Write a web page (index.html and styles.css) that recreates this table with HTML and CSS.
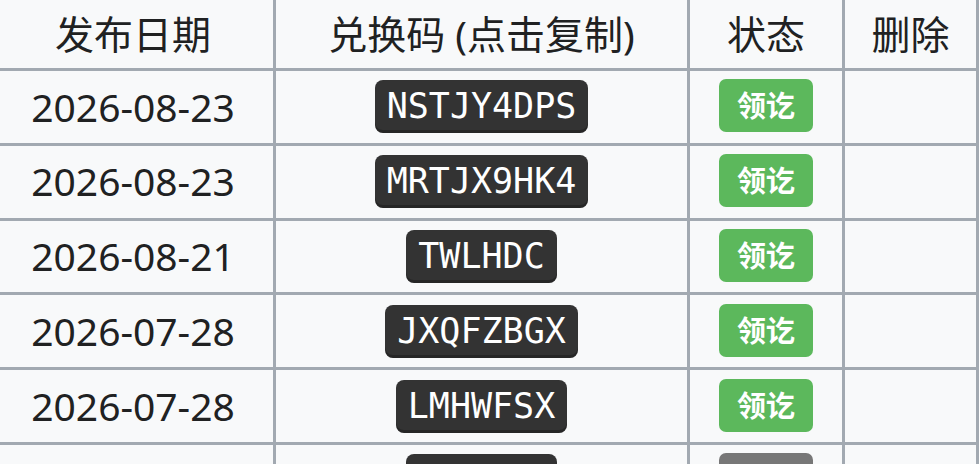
FILE: index.html
```html
<!DOCTYPE html>
<html>
<head>
<meta charset="UTF-8">
<title>兑换码</title>
<link rel="stylesheet" href="styles.css">
</head>
<body>
<table class="code_table">
  <tr>
    <th class="col_date">发布日期</th>
    <th class="col_code">兑换码 (点击复制)</th>
    <th class="col_state">状态</th>
    <th class="col_del">删除</th>
  </tr>
  <tr>
    <td>2026-08-23</td>
    <td><kbd class="code_key">NSTJY4DPS</kbd></td>
    <td><span class="state_label state_done">领讫</span></td>
    <td></td>
  </tr>
  <tr>
    <td>2026-08-23</td>
    <td><kbd class="code_key">MRTJX9HK4</kbd></td>
    <td><span class="state_label state_done">领讫</span></td>
    <td></td>
  </tr>
  <tr>
    <td>2026-08-21</td>
    <td><kbd class="code_key">TWLHDC</kbd></td>
    <td><span class="state_label state_done">领讫</span></td>
    <td></td>
  </tr>
  <tr>
    <td>2026-07-28</td>
    <td><kbd class="code_key">JXQFZBGX</kbd></td>
    <td><span class="state_label state_done">领讫</span></td>
    <td></td>
  </tr>
  <tr>
    <td>2026-07-28</td>
    <td><kbd class="code_key">LMHWFSX</kbd></td>
    <td><span class="state_label state_done">领讫</span></td>
    <td></td>
  </tr>
  <tr>
    <td>2026-07-25</td>
    <td><kbd class="code_key">QPRVKE</kbd></td>
    <td><span class="state_label state_gone">过期</span></td>
    <td></td>
  </tr>
</table>
</body>
</html>
```

FILE: styles.css
```css
html, body {
  margin: 0;
  padding: 0;
  overflow: hidden;
  background: #f8f9fa;
}

.code_table {
  margin: -3px 0 0 -10px;
  border-collapse: separate;
  border-spacing: 0;
  table-layout: fixed;
  border-top: 3px solid #a2a9b1;
  border-left: 3px solid #a2a9b1;
  font: normal 39px/1.2 "Noto Sans", "Noto Sans CJK SC", sans-serif;
  color: #202122;
  background: #f8f9fa;
}

.code_table th,
.code_table td {
  box-sizing: border-box;
  padding: 0;
  text-align: center;
  vertical-align: middle;
  border-right: 3px solid #a2a9b1;
  border-bottom: 3px solid #a2a9b1;
}

.code_table th {
  font-weight: normal;
  height: 71px;
}

.code_table td {
  height: 74.8px;
}

.col_date { width: 283px; }
.col_code { width: 414px; }
.col_state { width: 155px; }
.col_del { width: 134px; }

.code_key {
  display: block;
  width: max-content;
  margin: 0 auto;
  padding: 6px 12px;
  font: normal 35px/41px "DejaVu Sans Mono", monospace;
  color: #fff;
  background: #333;
  border-radius: 8px;
  box-shadow: inset 0 -3px 0 rgba(0,0,0,0.25);
  cursor: pointer;
}

.state_label {
  display: block;
  width: max-content;
  margin: -2px auto 0;
  padding: 11px 17.5px 13px;
  font: bold 29px/29px "Noto Sans CJK SC", sans-serif;
  color: #fff;
  border-radius: 7px;
}

.state_done { background: #5cb85c; }
.state_gone { background: #777; }
```
